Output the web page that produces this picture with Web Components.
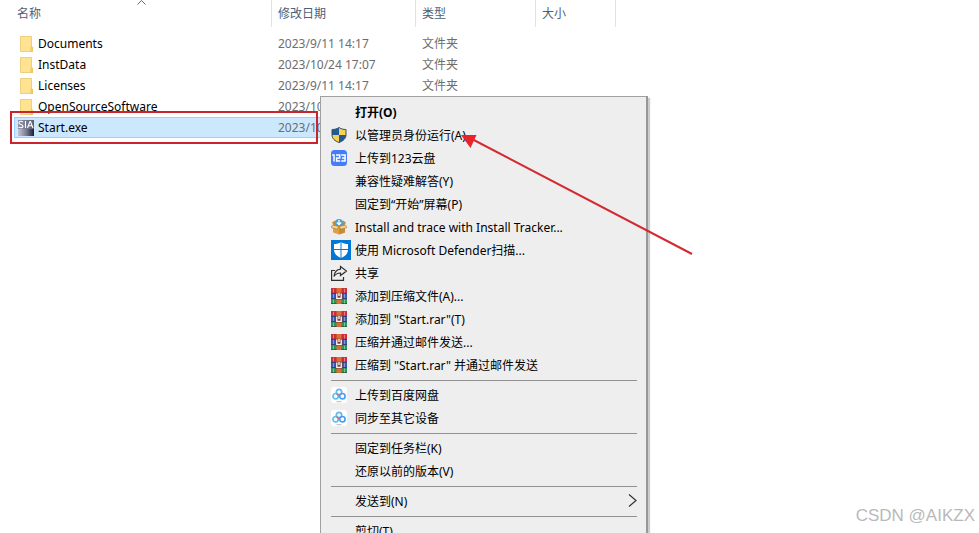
<!DOCTYPE html>
<html lang="zh-CN">
<head>
<meta charset="utf-8">
<title>文件资源管理器</title>
<style>
    html, body {
        height: 100%;
        margin: 0;
    }
    body {
        position: relative;
        overflow: hidden;
        background: #fff;
        color: #000;
        font: 12px/20px "Noto Sans", "Noto Sans CJK SC", sans-serif;
    }
</style>
</head>
<body>
<file-list></file-list>

<context-menu>
    <menu-item strong>打开(O)</menu-item>
    <menu-item icon="shield">以管理员身份运行(A)</menu-item>
    <menu-item icon="pan123">上传到123云盘</menu-item>
    <menu-item>兼容性疑难解答(Y)</menu-item>
    <menu-item>固定到“开始”屏幕(P)</menu-item>
    <menu-item icon="box">Install and trace with Install Tracker...</menu-item>
    <menu-item icon="defender">使用 Microsoft Defender扫描...</menu-item>
    <menu-item icon="share">共享</menu-item>
    <menu-item icon="rar">添加到压缩文件(A)...</menu-item>
    <menu-item icon="rar">添加到 "Start.rar"(T)</menu-item>
    <menu-item icon="rar">压缩并通过邮件发送...</menu-item>
    <menu-item icon="rar">压缩到 "Start.rar" 并通过邮件发送</menu-item>
    <menu-separator></menu-separator>
    <menu-item icon="baidu">上传到百度网盘</menu-item>
    <menu-item icon="baidu">同步至其它设备</menu-item>
    <menu-separator></menu-separator>
    <menu-item>固定到任务栏(K)</menu-item>
    <menu-item>还原以前的版本(V)</menu-item>
    <menu-separator></menu-separator>
    <menu-item submenu>发送到(N)</menu-item>
    <menu-separator></menu-separator>
    <menu-item>剪切(T)</menu-item>
</context-menu>

<mark-box></mark-box>
<mark-arrow></mark-arrow>
<water-mark>CSDN @AIKZX</water-mark>

<script>
const ICONS = {
    folder: `<svg width="16" height="16" viewBox="0 0 16 16">
        <path d="M2.500 .5h11v10l1 1v4h-12z" fill="#ffe391" stroke="#ecd080"/>
        <path d="M12.800 15.500v-4l.9-1.300.9 1.300v4z" fill="#f5d272" stroke="#e3bd55" stroke-width=".6"/>
    </svg>`,
    app: `<svg width="16" height="16" viewBox="0 0 16 16">
        <defs><linearGradient id="g"><stop offset="0" stop-color="#c4c5d2"/><stop offset=".5" stop-color="#7d7f95"/><stop offset="1" stop-color="#1d1e33"/></linearGradient></defs>
        <path d="M0 0h16v16H0z" fill="url(#g)"/>
        <path d="M0 0h16v9H0z" fill="#777990" opacity=".7"/>
        <path d="M5 2C2.500.5.5 1.500 1 3.200 1.500 4.800 5 4.300 5 6.200 5 8 2.200 8 .5 7M7.500 1v7M9.500 8l2.500-6.500h.5L15 8M10.500 5.700h3.500" fill="none" stroke="#fff" stroke-width="1.100"/>
    </svg>`,
    shield: `<svg width="16" height="16" viewBox="0 0 16 16">
        <path d="M8 .5C6 2 3.500 2.500 1 2.500V8c0 3.500 3 6 7 7.500 4-1.500 7-4 7-7.500V2.500C12.500 2.500 10 2 8 .5z" fill="#1d5c96"/>
        <path d="M8 .5C10 2 12.500 2.500 15 2.500V8H8zM8 8v7.500C4 14 1 11.500 1 8z" fill="#fbd04c"/>
        <path d="M8 .5C6 2 3.500 2.500 1 2.500V8c0 3.500 3 6 7 7.500 4-1.500 7-4 7-7.500V2.500C12.500 2.500 10 2 8 .5z" fill="none" stroke="#34526b"/>
    </svg>`,
    pan123: `<svg width="16" height="16" viewBox="0 0 16 16">
        <rect width="16" height="16" rx="3.500" fill="#447dfb"/>
        <path d="M1.200 5H3v6.500M5 5h3.700v3H5.600v3h3.600M10.200 5h3.900v6h-3.900M11 8h3" fill="none" stroke="#fff" stroke-width="1.500"/>
    </svg>`,
    box: `<svg width="16" height="16" viewBox="0 0 16 16">
        <path d="M1 3.500l3-2 3 4.500-4 1zM15 3.500l-3-2L9 6l4 1z" fill="#c58b3b"/>
        <circle cx="8" cy="4" r="4" fill="#4aa3cc"/>
        <path d="M8 1v4.500M5.800 3.500L8 5.700l2.200-2.200" fill="none" stroke="#fff" stroke-width="1.300"/>
        <path d="M2 7.500h12v6L8 15.500l-6-2z" fill="#dda047"/>
        <path d="M8 9l6-1.500v6L8 15.500z" fill="#c98a38"/>
        <path d="M1.500 6L0 8.500l6 1.800L8 7.500zM14.500 6L16 8.500l-6 1.800-2-2.800z" fill="#f7d28b" stroke="#a8702c" stroke-width=".6"/>
    </svg>`,
    defender: `<svg width="20" height="20" viewBox="0 0 20 20">
        <path d="M0 0h20v20H0z" fill="#0078d7"/>
        <path d="M10 2c-2 1.500-4.500 2-7 2v5.500C3 13.500 6 16.500 10 18c4-1.500 7-4.500 7-8.500V4c-2.500 0-5-.5-7-2z" fill="#fff"/>
        <path d="M10 2v16M3 9.500h14" stroke="#0078d7"/>
    </svg>`,
    share: `<svg width="16" height="16" viewBox="0 0 16 16">
        <path d="M4 5.500H.6v9.900h11.900V12M9.500 1.500l6 4.500-6 4.500V8C6.500 8 4.500 9 3 11.500 3.500 7 6 4.500 9.500 4.200z" fill="none" stroke="#303030" stroke-width="1.200"/>
    </svg>`,
    rar: `<svg width="16" height="16" viewBox="0 0 16 16">
        <path d="M0 0h16v5H0z" fill="#c9303c"/>
        <path d="M0 5h16v6H0z" fill="#3d59b5"/>
        <path d="M0 11h16v5H0z" fill="#2f9455"/>
        <path d="M0 5.300h16M0 10.700h16M0 15.600h16" stroke="#2a2440" stroke-width=".8" opacity=".7"/>
        <path d="M2.500 .8v3.800M13.500 .8v3.800" stroke="#ee7780"/>
        <path d="M2.500 6v4M13.500 6v4" stroke="#8197e0"/>
        <path d="M2.500 11.500v3.800M13.500 11.500v3.800" stroke="#75c890"/>
        <path d="M5.500 0h5v16h-5z" fill="#dc6d34"/>
        <path d="M4.500 4.800h7v6.700h-7z" fill="#7a3b35"/>
        <path d="M5.800 5.500v4.800h4.400V5.500M8 5v3" fill="none" stroke="#fff" stroke-width="1.300"/>
    </svg>`,
    baidu: `<svg width="16" height="16" viewBox="0 0 16 16">
        <rect width="16" height="16" rx="3" fill="#fff"/>
        <circle cx="8" cy="5" r="2.700" fill="none" stroke="#5fb8ee" stroke-width="1.700"/>
        <circle cx="4.600" cy="9.200" r="2.700" fill="none" stroke="#55c3f5" stroke-width="1.700"/>
        <circle cx="11.400" cy="9.200" r="2.700" fill="none" stroke="#4a9df0" stroke-width="1.700"/>
        <path d="M5.800 6.500c.6 1.600 1.800 2 3.400 2" fill="none" stroke="#f0667e" stroke-width="1.700"/>
        <path d="M5.500 14.700h5" stroke="#b5babf"/>
    </svg>`
};

const FILES = [
    { name: 'Documents', date: '2023/9/11 14:17', type: '文件夹', icon: 'folder' },
    { name: 'InstData', date: '2023/10/24 17:07', type: '文件夹', icon: 'folder' },
    { name: 'Licenses', date: '2023/9/11 14:17', type: '文件夹', icon: 'folder' },
    { name: 'OpenSourceSoftware', date: '2023/10', type: '', icon: 'folder' },
    { name: 'Start.exe', date: '2023/10', type: '', icon: 'app', selected: true }
];

class FileList extends HTMLElement {
    connectedCallback() {
        this.attachShadow({ mode: 'open' });
        this.shadowRoot.innerHTML = `
            <style>
                :host {
                    display: block;
                    padding-left: 14px;
                }
                table {
                    width: 602px;
                    table-layout: fixed;
                    border-collapse: separate;
                    border-spacing: 0;
                }
                th, td {
                    box-sizing: border-box;
                    padding: 0 6px;
                    text-align: left;
                    font-weight: normal;
                    white-space: nowrap;
                    color: #6d6d6d;
                }
                th {
                    height: 27px;
                    border-right: 1px solid #e2e2e2;
                    color: #4c607a;
                }
                th:first-child {
                    padding-left: 3px;
                }
                .head {
                    display: flex;
                    position: relative;
                }
                .sort {
                    position: absolute;
                    top: -4px;
                    left: 50%;
                    margin-left: -4px;
                }
                tbody::before {
                    content: '';
                    display: block;
                    height: 6px;
                }
                td {
                    height: 21px;
                }
                .name {
                    display: flex;
                    align-items: center;
                    gap: 4px;
                    color: #000;
                }
                td:first-child {
                    padding-left: 4px;
                }
                .selected td {
                    background: #cce8ff;
                    border: solid #99d1ff;
                    border-width: 1px 0;
                    line-height: 19px;
                }
                .selected td:first-child {
                    padding-left: 3px;
                    border-left-width: 1px;
                }
                .selected td:last-child {
                    border-right-width: 1px;
                }
            </style>
            <table>
                <colgroup>
                    <col style="width: 258px"><col style="width: 144px">
                    <col style="width: 120px"><col style="width: 80px">
                </colgroup>
                <thead>
                    <tr>
                        <th><div class="head">名称
                            <svg class="sort" width="9" height="5" viewBox="0 0 9 5"><path d="M.5 4.500l4-4 4 4" fill="none" stroke="#666"/></svg>
                        </div></th>
                        <th>修改日期</th>
                        <th>类型</th>
                        <th>大小</th>
                    </tr>
                </thead>
                <tbody>
                    ${FILES.map(f => `
                        <tr class="${f.selected ? 'selected' : ''}">
                            <td><div class="name">${ICONS[f.icon]}<span>${f.name}</span></div></td>
                            <td>${f.date}</td>
                            <td>${f.type}</td>
                            <td></td>
                        </tr>`).join('')}
                </tbody>
            </table>
        `;
    }
}

class ContextMenu extends HTMLElement {
    connectedCallback() {
        this.attachShadow({ mode: 'open' });
        this.shadowRoot.innerHTML = `
            <style>
                :host {
                    position: absolute;
                    top: 96px;
                    left: 320px;
                    box-sizing: border-box;
                    width: 328px;
                    padding: 4px 9px 4px 10px;
                    background: #eee;
                    border: 1px solid #a0a0a0;
                    border-right: 2px solid #979797;
                    box-shadow: 2px 2px 1px rgba(0, 0, 0, 0.2);
                }
            </style>
            <slot></slot>
        `;
    }
}

class MenuItem extends HTMLElement {
    connectedCallback() {
        const icon = ICONS[this.getAttribute('icon')] || '';
        const arrow = this.hasAttribute('submenu')
            ? '<svg width="9" height="15" viewBox="0 0 9 15"><path d="M1 .5l7 6-7 6" fill="none" stroke="#333" stroke-width="1.200"/></svg>'
            : '';
        this.attachShadow({ mode: 'open' });
        this.shadowRoot.innerHTML = `
            <style>
                :host {
                    display: block;
                }
                button {
                    display: flex;
                    align-items: center;
                    width: 100%;
                    height: 23px;
                    padding: 0;
                    border: 0;
                    background: none;
                    color: inherit;
                    font: inherit;
                    text-align: left;
                    white-space: nowrap;
                }
                :host([strong]) button {
                    font-weight: bold;
                }
                .icon {
                    display: flex;
                    align-items: center;
                    flex: none;
                    width: 24px;
                    height: 21px;
                    margin-bottom: 2px;
                }
                .label {
                    flex: 1;
                }
            </style>
            <button type="button">
                <span class="icon">${icon}</span>
                <span class="label"><slot></slot></span>
                ${arrow}
            </button>
        `;
    }
}

class MenuSeparator extends HTMLElement {
    connectedCallback() {
        this.attachShadow({ mode: 'open' });
        this.shadowRoot.innerHTML = `
            <style>
                :host {
                    display: block;
                    padding: 3px 0;
                }
                div {
                    height: 1px;
                    background: #919191;
                }
            </style>
            <div></div>
        `;
    }
}

class MarkBox extends HTMLElement {
    connectedCallback() {
        this.attachShadow({ mode: 'open' });
        this.shadowRoot.innerHTML = `
            <style>
                :host {
                    position: absolute;
                    top: 111px;
                    left: 10px;
                    box-sizing: border-box;
                    width: 308px;
                    height: 33px;
                    border: 2px solid #c9252d;
                    pointer-events: none;
                }
            </style>
        `;
    }
}

class MarkArrow extends HTMLElement {
    connectedCallback() {
        this.attachShadow({ mode: 'open' });
        this.shadowRoot.innerHTML = `
            <style>
                :host {
                    position: absolute;
                    top: 130px;
                    left: 460px;
                    pointer-events: none;
                }
                svg {
                    display: block;
                }
            </style>
            <svg width="236" height="128" viewBox="0 0 236 128">
                <path d="M10 8l222 116" stroke="#d32a31" stroke-width="2"/>
                <path d="M1 5l15.500 0-6 13z" fill="#e8242b"/>
            </svg>
        `;
    }
}

class WaterMark extends HTMLElement {
    connectedCallback() {
        this.attachShadow({ mode: 'open' });
        this.shadowRoot.innerHTML = `
            <style>
                :host {
                    position: absolute;
                    right: 4px;
                    bottom: 6px;
                    color: #b9b9b9;
                    font: 17px/22px "Liberation Sans", sans-serif;
                }
            </style>
            <slot></slot>
        `;
    }
}

customElements.define('file-list', FileList);
customElements.define('context-menu', ContextMenu);
customElements.define('menu-item', MenuItem);
customElements.define('menu-separator', MenuSeparator);
customElements.define('mark-box', MarkBox);
customElements.define('mark-arrow', MarkArrow);
customElements.define('water-mark', WaterMark);
</script>
</body>
</html>
